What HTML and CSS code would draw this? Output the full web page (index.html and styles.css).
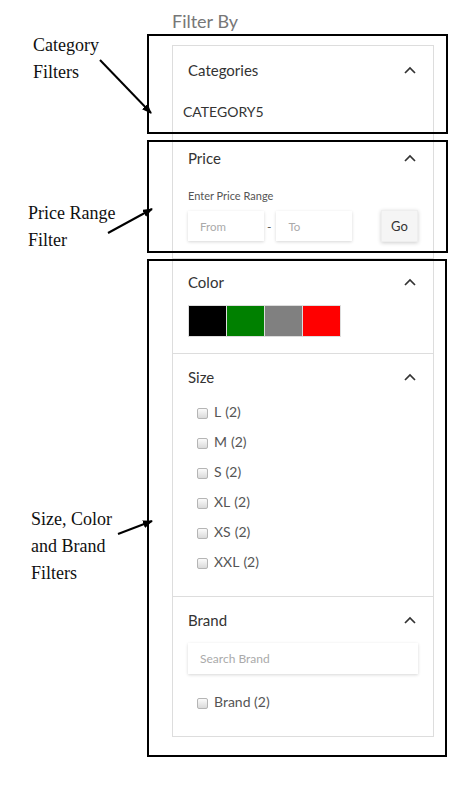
FILE: index.html
```html
<!DOCTYPE html>
<html lang="en">
<head>
  <meta charset="UTF-8" />
  <meta name="viewport" content="width=device-width, initial-scale=1.0"/>
  <title>Filter Sidebar</title>
  <link rel="stylesheet" href="styles.css">
</head>
<body>
  <div class="page">
    <aside class="filters">
      <h3 class="filters-title">Filter By</h3>

      <div class="filter-panel">
        <section class="filter filter-categories">
          <div class="filter-head">
            <span>Categories</span>
            <svg class="chevron" width="12" height="8" viewBox="0 0 12 8"><path d="M1 7L6 2L11 7"/></svg>
          </div>
          <div class="category-item">CATEGORY5</div>
        </section>

        <section class="filter filter-price">
          <div class="filter-head">
            <span>Price</span>
            <svg class="chevron" width="12" height="8" viewBox="0 0 12 8"><path d="M1 7L6 2L11 7"/></svg>
          </div>
          <div class="price-label">Enter Price Range</div>
          <div class="price-row">
            <input type="text" class="price-input" placeholder="From">
            <span class="dash">-</span>
            <input type="text" class="price-input" placeholder="To">
            <button class="go-btn">Go</button>
          </div>
        </section>

        <section class="filter filter-color">
          <div class="filter-head">
            <span>Color</span>
            <svg class="chevron" width="12" height="8" viewBox="0 0 12 8"><path d="M1 7L6 2L11 7"/></svg>
          </div>
          <div class="swatches">
            <span class="swatch swatch-black"></span>
            <span class="swatch swatch-green"></span>
            <span class="swatch swatch-gray"></span>
            <span class="swatch swatch-red"></span>
          </div>
        </section>

        <section class="filter filter-size">
          <div class="filter-head">
            <span>Size</span>
            <svg class="chevron" width="12" height="8" viewBox="0 0 12 8"><path d="M1 7L6 2L11 7"/></svg>
          </div>
          <ul class="check-list">
            <li><label><input type="checkbox">L <span class="count">(2)</span></label></li>
            <li><label><input type="checkbox">M <span class="count">(2)</span></label></li>
            <li><label><input type="checkbox">S <span class="count">(2)</span></label></li>
            <li><label><input type="checkbox">XL <span class="count">(2)</span></label></li>
            <li><label><input type="checkbox">XS <span class="count">(2)</span></label></li>
            <li><label><input type="checkbox">XXL <span class="count">(2)</span></label></li>
          </ul>
        </section>

        <section class="filter filter-brand">
          <div class="filter-head">
            <span>Brand</span>
            <svg class="chevron" width="12" height="8" viewBox="0 0 12 8"><path d="M1 7L6 2L11 7"/></svg>
          </div>
          <input type="text" class="brand-search" placeholder="Search Brand">
          <ul class="check-list brand-list">
            <li><label><input type="checkbox">Brand (2)</label></li>
          </ul>
        </section>
      </div>
    </aside>

    <!-- annotations -->
    <div class="note note-category">Category<br>Filters</div>
    <div class="note note-price">Price Range<br>Filter</div>
    <div class="note note-size">Size, Color<br>and Brand<br>Filters</div>

    <div class="frame frame-category"></div>
    <div class="frame frame-price"></div>
    <div class="frame frame-size"></div>

    <svg class="arrows" width="459" height="798" viewBox="0 0 459 798">
      <defs>
        <marker id="head" markerWidth="10" markerHeight="8" refX="9" refY="4" orient="auto" markerUnits="userSpaceOnUse">
          <path d="M0 0L10 4L0 8Z" fill="#000"/>
        </marker>
      </defs>
      <line x1="100" y1="60" x2="151" y2="113" marker-end="url(#head)"/>
      <line x1="108" y1="233" x2="152" y2="209" marker-end="url(#head)"/>
      <line x1="118" y1="534" x2="152" y2="521" marker-end="url(#head)"/>
    </svg>
  </div>
</body>
</html>
```

FILE: styles.css
```css
body {
  margin: 0;
  background: #fff;
  font-family: Lato, "Open Sans", sans-serif;
  color: #333;
}
.page {
  position: relative;
  width: 459px;
  height: 798px;
  overflow: hidden;
}
.filters {
  margin-left: 172px;
  width: 262px;
}
.filters-title {
  margin: 0 0 13px;
  padding-top: 10px;
  font-size: 18px;
  line-height: 22px;
  font-weight: normal;
  color: #777;
}
.filter-panel {
  border: 1px solid #ddd;
}
.filter {
  padding: 13px 15px 16px;
  border-top: 1px solid #ddd;
}
.filter:first-child {
  border-top: none;
}
.filter-categories {
  padding-top: 14px;
  padding-bottom: 19px;
}
.filter-price {
  padding-top: 7px;
  padding-bottom: 16px;
}
.filter-color {
  padding-bottom: 16px;
}
.filter-size {
  padding-bottom: 20px;
}
.filter-brand {
  padding-bottom: 20px;
}
.filter-head {
  display: flex;
  justify-content: space-between;
  align-items: center;
  font-size: 15px;
  line-height: 20px;
  color: #333;
}
.chevron {
  margin-right: 2px;
}
.chevron path {
  fill: none;
  stroke: #333;
  stroke-width: 1.7;
}
.category-item {
  margin: 23px 0 0 -5px;
  font-size: 14px;
  line-height: 18px;
  color: #333;
}
.price-label {
  margin-top: 21px;
  font-size: 11px;
  line-height: 14px;
  color: #555;
}
.price-row {
  display: flex;
  align-items: center;
  height: 32px;
  margin-top: 7px;
}
.price-input {
  box-sizing: border-box;
  width: 76px;
  height: 30px;
  padding: 0 12px;
  border: none;
  box-shadow: 0 1px 3px rgba(0,0,0,0.16);
  font-family: Lato, sans-serif;
  font-size: 11.5px;
  color: #333;
}
.price-input::placeholder,
.brand-search::placeholder {
  color: #aaa;
}
.dash {
  margin: 0 5px 0 3px;
  font-size: 12px;
  color: #555;
}
.go-btn {
  box-sizing: border-box;
  width: 37px;
  height: 32px;
  margin-left: auto;
  border: 1px solid #eee;
  background: #f5f5f5;
  box-shadow: 0 1px 4px rgba(0,0,0,0.2);
  font-family: Lato, sans-serif;
  font-size: 13px;
  color: #333;
  padding: 0;
}
.swatches {
  display: flex;
  margin-top: 13px;
}
.swatch {
  box-sizing: border-box;
  width: 39px;
  height: 32px;
  margin-right: -1px;
  border: 1px solid #ddd;
}
.swatch-black { background: #000; }
.swatch-green { background: #008000; }
.swatch-gray { background: #808080; }
.swatch-red { background: #f00; }
.check-list {
  list-style: none;
  margin: 9px 0 0;
  padding: 0 0 0 9px;
}
.check-list li {
  height: 30px;
}
.check-list label {
  display: flex;
  align-items: center;
  height: 30px;
  font-size: 14px;
  color: #555;
}
.check-list input {
  appearance: none;
  -webkit-appearance: none;
  box-sizing: border-box;
  width: 11px;
  height: 11px;
  margin: 4px 6px 0 0;
  border: 1px solid #b5b5b5;
  border-radius: 2px;
  background: linear-gradient(#fbfbfb, #dadada);
}
.count {
  margin-left: 4px;
}
.brand-search {
  display: block;
  box-sizing: border-box;
  width: 100%;
  height: 31px;
  margin-top: 13px;
  padding: 0 12px;
  border: none;
  box-shadow: 0 1px 3px rgba(0,0,0,0.16);
  font-family: Lato, sans-serif;
  font-size: 12px;
}
.brand-list {
  margin-top: 12px;
}
.note {
  position: absolute;
  font-family: "Liberation Serif", serif;
  font-size: 18px;
  line-height: 27px;
  color: #111;
}
.note-category { left: 33px; top: 32px; }
.note-price { left: 28px; top: 200px; }
.note-size { left: 31px; top: 506px; }
.frame {
  position: absolute;
  box-sizing: border-box;
  border: 2px solid #000;
}
.frame-category { left: 147px; top: 34px; width: 301px; height: 100px; }
.frame-price { left: 147px; top: 140px; width: 301px; height: 113px; }
.frame-size { left: 147px; top: 259px; width: 300px; height: 498px; }
.arrows {
  position: absolute;
  top: 0;
  left: 0;
  pointer-events: none;
}
.arrows line {
  stroke: #000;
  stroke-width: 2;
}
```
